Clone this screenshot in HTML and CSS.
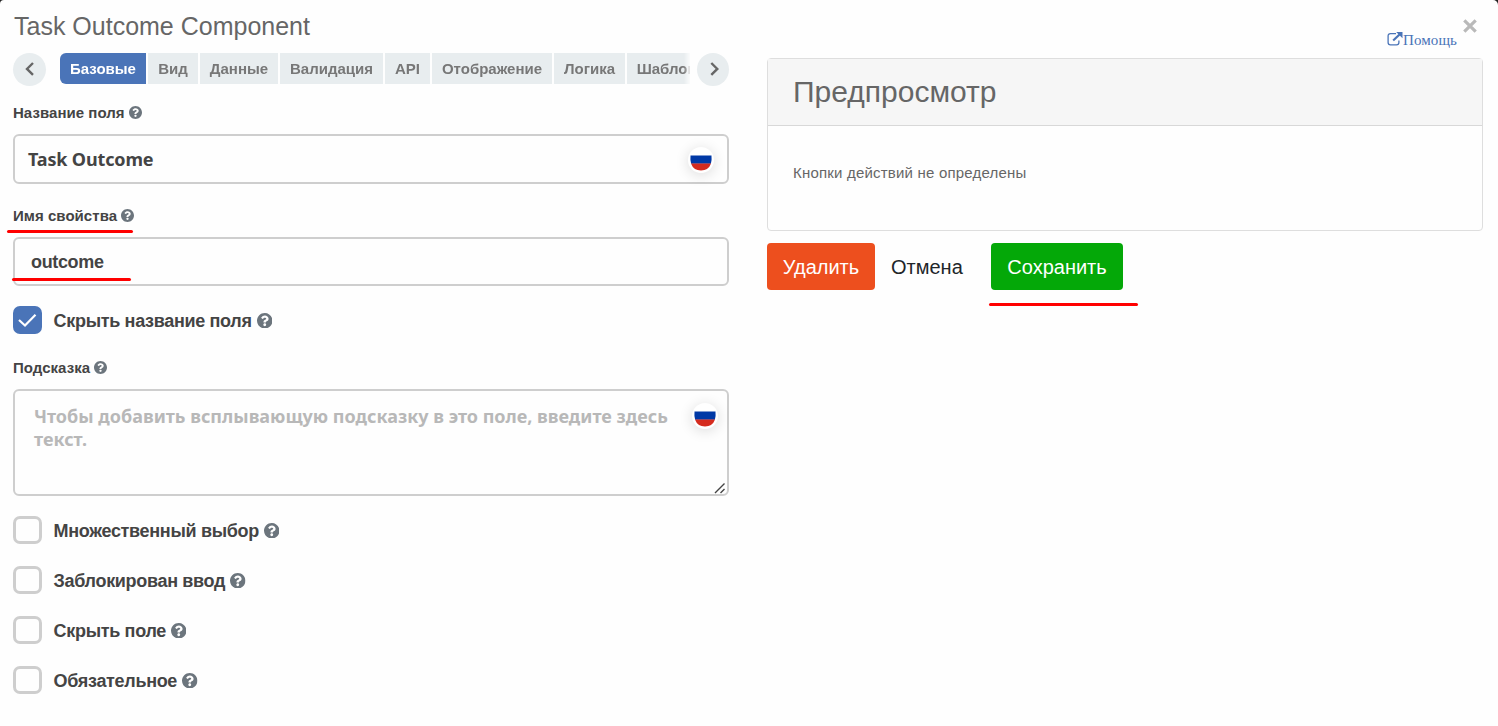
FILE: index.html
```html
<!DOCTYPE html>
<html lang="ru">
<head>
<meta charset="utf-8">
<title>Task Outcome Component</title>
<link rel="stylesheet" href="styles.css">
</head>
<body>
<svg class="defs" width="0" height="0">
  <symbol id="help" viewBox="8 8 496 496"><path fill="#6c757d" d="M504 256c0 137-111 248-248 248S8 393 8 256 119 8 256 8s248 111 248 248zM262.700 90c-54.500 0-89.200 23-116.500 63.800-3.500 5.300-2.400 12.400 2.700 16.300l34.700 26.300c5.200 3.900 12.600 3 16.700-2.100 17.900-22.700 30.100-35.800 57.300-35.800 20.400 0 45.700 13.100 45.700 33 0 15-12.400 22.700-32.500 34C247.100 238.500 216 254.900 216 296v4c0 6.600 5.400 12 12 12h56c6.600 0 12-5.400 12-12v-1.300c0-28.500 83.200-29.600 83.200-106.700 0-58-60.200-102-116.500-102zM256 338c-25.400 0-46 20.600-46 46s20.600 46 46 46 46-20.600 46-46-20.600-46-46-46z"/></symbol>
  <symbol id="flag" viewBox="0 0 26 26"><circle cx="13" cy="13" r="12.500" fill="#fff"/><path fill="#0039a6" d="M2.500 8.500h21q.5 4.500-.7 8.200H3.200Q2 13 2.500 8.500z"/><path fill="#d52b1e" d="M3 16.500h20q-2.500 7-10 7t-10-7z"/></symbol>
</svg>
<div class="modal">
  <main class="settings">
    <h1 class="title"><span>Task Outcome Component</span></h1>
    <nav class="tabbar">
      <button class="scroll" aria-label="Назад"><svg width="33" height="33" viewBox="0 0 33 33"><path d="M20 10l-6 5.900 6 5.900"/></svg></button>
      <div class="tabs">
        <a class="tab active">Базовые</a><a class="tab t2">Вид</a><a class="tab t3">Данные</a><a class="tab t4">Валидация</a><a class="tab t5">API</a><a class="tab t6">Отображение</a><a class="tab t7">Логика</a><a class="tab t8">Шаблоны</a>
      </div>
      <button class="scroll next" aria-label="Вперёд"><svg width="32" height="33" viewBox="0 0 32 33"><path d="M14.300 10l6 5.900-6 5.900"/></svg></button>
    </nav>
    <div class="label first"><span>Название поля</span><svg><use href="#help"/></svg></div>
    <div class="field name"><span>Task Outcome</span><svg class="flag"><use href="#flag"/></svg></div>
    <div class="label second"><span>Имя свойства</span><svg><use href="#help"/></svg><i class="mark mark-label"></i></div>
    <div class="field key"><span>outcome</span><i class="mark mark-key"></i></div>
    <div class="check hide-label"><i class="box on"><svg width="28" height="28" viewBox="0 0 28 28"><path d="M6 14l6 5.500L22.500 8.800"/></svg></i><span>Скрыть название поля</span><svg class="help"><use href="#help"/></svg></div>
    <div class="label third"><span>Подсказка</span><svg><use href="#help"/></svg></div>
    <div class="area"><p>Чтобы добавить всплывающую подсказку в это поле, введите здесь<br>текст.</p><svg class="flag"><use href="#flag"/></svg><svg class="grip" viewBox="0 0 12 12"><path d="M1 11L10.500 1.500M6.500 11l4-4"/></svg></div>
    <div class="checks">
      <div class="check"><i class="box"></i><span>Множественный выбор</span><svg class="help"><use href="#help"/></svg></div>
      <div class="check"><i class="box"></i><span>Заблокирован ввод</span><svg class="help"><use href="#help"/></svg></div>
      <div class="check"><i class="box"></i><span>Скрыть поле</span><svg class="help"><use href="#help"/></svg></div>
      <div class="check"><i class="box"></i><span>Обязательное</span><svg class="help"><use href="#help"/></svg></div>
    </div>
  </main>
  <aside class="side">
    <div class="top">
      <a class="link"><svg width="16" height="14" viewBox="0 0 16 14"><path d="M9 1.700H3.500Q1.100 1.700 1.100 4v6.500q0 2.400 2.400 2.400h6q2.400 0 2.400-2.400V8.500" fill="none" stroke="#4a74b8" stroke-width="1.300"/><path d="M6.200 8.500l6.600-6.300" stroke="#4a74b8" stroke-width="2.200"/><path d="M9.200 0h6.300v6.300z" fill="#4a74b8"/></svg><span>Помощь</span></a>
      <svg class="close" width="14" height="14" viewBox="0 0 14 14"><path d="M1.300 1.300l11.400 11.400M12.700 1.300L1.300 12.700"/></svg>
    </div>
    <section class="card">
      <h2><span>Предпросмотр</span></h2>
      <p><span>Кнопки действий не определены</span></p>
    </section>
    <div class="actions">
      <button class="btn delete"><span>Удалить</span></button>
      <button class="btn cancel"><span>Отмена</span></button>
      <button class="btn save"><span>Сохранить</span><i class="mark mark-save"></i></button>
    </div>
  </aside>
</div>
</body>
</html>
```
FILE: styles.css
```css
* { box-sizing: border-box; }
body { margin: 0; background: #222; font-family: "Liberation Sans", Arial, sans-serif; color: #444; overflow: hidden; }
.defs { position: absolute; }
svg { display: block; flex: none; }
h1, h2, p { margin: 0; font-weight: 400; }
button { border: 0; padding: 0; font-family: inherit; }
.modal { display: flex; gap: 38px; height: 726px; padding: 0 15px 0 13px; background: #fefefe; border-radius: 4px 5px 0 0; }
.settings, .side { width: 716px; flex: none; }
.title { height: 53px; padding: 12px 0 0 1px; font-size: 25px; line-height: 29px; color: #666; white-space: nowrap; }
.tabbar { display: flex; height: 33px; }
.scroll { width: 33px; height: 33px; border-radius: 50%; background: #e8edef; flex: none; }
.scroll.next { width: 32px; }
.scroll path { fill: none; stroke: #666; stroke-width: 2.4; }
.tabs { display: flex; gap: 2px; width: 631px; height: 31px; margin: 0 6px 0 14px; overflow: hidden; mask-image: linear-gradient(to right, #000 624px, transparent 631px); }
.next { margin-left: 1px; }
.tab { flex: none; width: 86px; background: #e8edef; color: #777; font-size: 15px; font-weight: 700; line-height: 31px; text-align: center; white-space: nowrap; }
.tab.active { background: #4a74b8; color: #fff; border-radius: 6px 0 0 6px; }
.t2 { width: 50px; }
.t3 { width: 78px; }
.t4 { width: 103px; }
.t5 { width: 45px; }
.t6 { width: 120px; }
.t7 { width: 71px; }
.t8 { width: 92px; }
.label { position: relative; display: flex; align-items: center; gap: 4px; height: 20px; font-size: 15px; font-weight: 700; letter-spacing: .04px; white-space: nowrap; }
.label svg { width: 13px; height: 13px; }
.first { margin-top: 16px; }
.second { margin-top: 21px; }
.third { margin-top: 23px; }
.field, .area { position: relative; display: flex; border: 2px solid #cecece; border-radius: 6px; }
.field { align-items: center; }
.name { height: 50px; margin-top: 12px; padding-left: 13px; font: 700 18px "Noto Sans", sans-serif; letter-spacing: -.15px; }
.key { height: 49px; margin-top: 12px; padding: 2px 0 0 16px; font-size: 18px; font-weight: 700; letter-spacing: -.35px; }
.flag { position: absolute; top: 11px; right: 13.5px; width: 26px; height: 26px; border-radius: 50%; box-shadow: 0 2px 14px rgba(0, 0, 0, .14); }
.check { display: flex; align-items: center; height: 28px; font-size: 18px; font-weight: 700; letter-spacing: -.32px; white-space: nowrap; }
.check span { padding-top: 2px; }
.check .help { width: 15.5px; height: 15.5px; margin: 1px 0 0 5px; }
.box { width: 29px; height: 28px; margin-right: 11.6px; border: 3px solid #cecece; border-radius: 7px; flex: none; }
.box.on { border: 0; background: #4a74b8; }
.box path { fill: none; stroke: #fff; stroke-width: 2.2; }
.hide-label { margin-top: 20px; }
.area { height: 107px; margin-top: 12px; padding: 14px 0 0 19px; color: #b8b8b8; font: 18px/23px "Noto Sans", sans-serif; white-space: nowrap; }
.area p { font-weight: 700; }
.area .flag { right: 9.5px; top: 12px; }
.grip { position: absolute; right: 1px; bottom: 0; width: 12px; height: 12px; }
.grip path { fill: none; stroke: #444; stroke-width: 1.4; }
.checks { display: grid; gap: 22px; margin-top: 20px; }
.mark { position: absolute; height: 3px; border-radius: 2px; background: #f00; }
.mark-label { left: -6px; top: 25px; width: 126px; }
.mark-key { left: -3px; bottom: 3px; width: 119px; }
.mark-save { left: -2px; top: 60px; width: 149px; }
.top { display: flex; justify-content: flex-end; height: 58px; padding-right: 6px; }
.link { display: flex; margin: 32px 6px 0 0; color: #4a74b8; font: 15px/17px "Liberation Serif", serif; letter-spacing: .1px; }
.close { margin-top: 19px; }
.close path { fill: none; stroke: #b9b9b9; stroke-width: 3.2; }
.card { height: 173px; border: 1px solid #dedede; border-radius: 4px; }
.card h2 { height: 67px; padding: 15px 25px; border-bottom: 1px solid #d8d8d8; background: #f6f6f6; color: #666; font-size: 30px; line-height: 36px; }
.card p { padding: 36px 25px; color: #666; font-size: 15px; line-height: 22px; letter-spacing: .2px; }
.actions { display: flex; margin-top: 12px; }
.btn { position: relative; height: 47px; padding-top: 2px; border-radius: 4px; color: #fff; font-size: 20px; white-space: nowrap; }
.delete { width: 108px; background: #ed4f1e; }
.cancel { width: 104px; margin-right: 12px; padding-right: 32px; padding-left: 16px; background: none; color: #212529; text-align: left; }
.save { width: 132px; background: #04a808; }
```
